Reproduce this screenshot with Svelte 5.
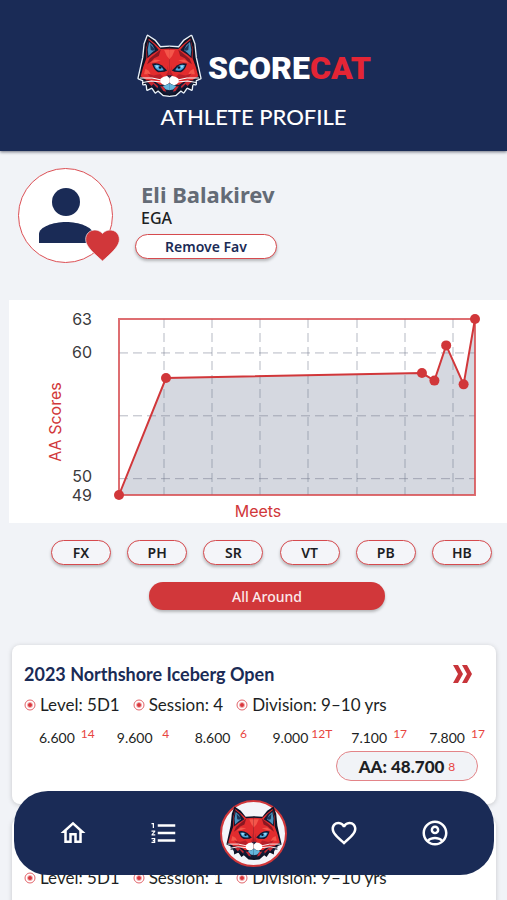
<script>
	const plot = { left: 110, top: 19, width: 356, height: 176 };
	const domain = { min: 48.7, max: 62.7 };

	// day = share of the season that has passed, 0 to 1
	const scores = [
		{ day: 0, value: 48.7 },
		{ day: 0.132, value: 58 },
		{ day: 0.851, value: 58.4 },
		{ day: 0.886, value: 57.8 },
		{ day: 0.919, value: 60.6 },
		{ day: 0.968, value: 57.5 },
		{ day: 1, value: 62.7 }
	];

	const x = (day) => plot.left + day * plot.width;
	const y = (value) =>
		plot.top + ((domain.max - value) / (domain.max - domain.min)) * plot.height;

	const line = scores.map((s) => `${x(s.day)},${y(s.value)}`).join(' ');
	const area = `${line} ${x(1)},${y(domain.min)} ${x(0)},${y(domain.min)}`;
	const columns = [155, 203, 251, 299, 348, 396, 444];
	const rows = [60, 55, 50];

	const events = ['FX', 'PH', 'SR', 'VT', 'PB', 'HB'];

	const meets = [
		{
			name: '2023 Northshore Iceberg Open',
			level: '5D1',
			session: '4',
			division: '9–10 yrs',
			results: [
				['6.600', '14'],
				['9.600', '4'],
				['8.600', '6'],
				['9.000', '12T'],
				['7.100', '17'],
				['7.800', '17']
			],
			total: ['48.700', '8']
		},
		{
			level: '5D1',
			session: '1',
			division: '9–10 yrs',
			results: []
		}
	];
</script>

{#snippet catSide()}
	<path fill="#0d1226" d="M113 52 L84 54 L68 34 L47 20 L38 44 L34 84 L25 124 L20 146 L34 152 L34 164 L44 162 L46 180 L60 173 L70 188 L78 182 L94 196 L113 198Z" />
	<path fill="#e22c2e" d="M113 57 L86 59 L68 42 L50 28 L43 54 L43 86 L33 114 L26 140 L44 152 L68 156 L84 166 L113 160Z" />
	<path fill="#151a33" d="M49 31 L44 58 L46 86 L58 76 L80 62 L66 45Z" />
	<path fill="#4a93bf" d="M51 38 L47 60 L49 80 L58 71 L69 62 L62 48Z" />
	<path fill="#1d3558" d="M54 44 L56 62 L63 64 L69 60Z" />
	<path fill="#8a1722" d="M86 60 L74 70 L52 88 L45 104 L58 95 L66 86 L80 80Z" />
	<path fill="#f4564a" d="M96 62 L104 80 L113 90 L113 62Z M54 100 L68 90 L86 92 L70 98Z M40 118 L50 124 L56 134 L36 134Z" />
	<path fill="#b81f29" d="M46 132 L64 138 L84 133 L92 141 L80 151 L58 148Z" />
	<path fill="#111832" d="M60 103 Q74 98 90 108 L105 123 L97 127 L78 128 Q66 124 60 103Z" />
	<path fill="#4ba9de" d="M66 107 Q84 102 95 122 Q72 128 66 107Z" />
	<path fill="#a5def5" d="M70 108 L79 109 L75 117Z" />
	<circle cx="84" cy="114" r="4" fill="#0d1226" />
	<path fill="#ba1d29" d="M105 108 L107 128 L101 137 L113 140 L113 134 L109 122Z" />
	<path fill="#131b35" d="M34 152 L64 155 L82 166 L98 166 L113 176 L113 194 L96 190 L85 180 L76 181 L68 172 L60 175 L54 167 L46 170Z" />
	<path fill="#c72831" d="M40 153 L62 156 L78 170 L76 176 L64 163 L58 169 L50 160Z M84 170 L95 171 L102 186 L94 184Z" />
	<path fill="#fff" d="M113 141 Q98 136 86 147 Q80 163 98 167 Q108 165 113 158Z" />
	<path fill="#63b6dc" d="M92 169 L106 165 L113 160 L113 182 L101 180Z" />
	<path fill="#172345" d="M104 138 L113 137 L113 147Z" />
	<path fill="none" stroke="#fff" stroke-width="3" d="M88 151 L60 145 L24 145 M87 157 L58 154 L32 159" />
{/snippet}

{#snippet cat(outline)}
	<svg class="cat" viewBox="12 8 200 200" aria-hidden="true">
		{#if outline}
			<path
				fill="#fff"
				stroke="#e9f1f8"
				stroke-width="8"
				stroke-linejoin="round"
				d="M112 52 L84 54 L68 34 L47 20 L38 44 L34 84 L25 124 L20 146 L34 152 L34 164 L44 162 L46 180 L60 173 L70 188 L78 182 L94 196 L112 198 L130 196 L146 182 L154 188 L164 173 L178 180 L180 162 L190 164 L190 152 L204 146 L199 124 L190 84 L186 44 L177 20 L156 34 L140 54Z"
			/>
		{/if}
		{@render catSide()}
		<g transform="translate(224 0) scale(-1 1)">{@render catSide()}</g>
	</svg>
{/snippet}

{#snippet bullet()}
	<svg class="bullet" viewBox="0 0 12 12" aria-hidden="true">
		<circle cx="6" cy="6" r="5" fill="#fff" stroke="#e2646a" />
		<circle cx="6" cy="6" r="2.5" fill="#d9363c" stroke="#f3b3b5" />
	</svg>
{/snippet}

<div class="app">
	<header>
		<div class="brand">
			{@render cat(true)}
			<span class="wordmark">SCORE<span>CAT</span></span>
		</div>
		<h1>ATHLETE PROFILE</h1>
	</header>

	<main>
		<section class="profile">
			<div class="avatar">
				<svg class="person" viewBox="0 0 54 56" aria-hidden="true">
					<circle cx="27" cy="14" r="14" />
					<path d="M0 55V46C0 39 14 34 27 34S54 39 54 46V55Z" />
				</svg>
				<svg class="fav" viewBox="2 3 20 19" aria-hidden="true">
					<path d="M12 21.4l-1.5-1.3C5.4 15.4 2 12.3 2 8.5 2 5.4 4.4 3 7.5 3c1.7 0 3.4.8 4.5 2.1C13.1 3.8 14.8 3 16.5 3 19.6 3 22 5.4 22 8.5c0 3.8-3.4 6.9-8.5 11.6L12 21.4z" />
				</svg>
			</div>
			<div class="who">
				<h2>Eli Balakirev</h2>
				<p>EGA</p>
				<button class="pill remove">Remove Fav</button>
			</div>
		</section>

		<section class="chart">
			<svg viewBox="0 0 498 223" role="img" aria-label="AA Scores by meet">
				<polygon class="area" points={area} />
				<g class="grid">
					{#each columns as col}
						<line x1={col} x2={col} y1={plot.top} y2={plot.top + plot.height} />
					{/each}
					{#each rows as row}
						<line x1={plot.left} x2={plot.left + plot.width} y1={y(row)} y2={y(row)} />
					{/each}
				</g>
				<rect class="frame" x={plot.left} y={plot.top} width={plot.width} height={plot.height} />
				<polyline class="line" points={line} />
				{#each scores as s}
					<circle class="dot" cx={x(s.day)} cy={y(s.value)} r="5" />
				{/each}
				<g class="ticks">
					<text x="83" y="25">63</text>
					<text x="83" y="58">60</text>
					<text x="83" y="182">50</text>
					<text x="83" y="201">49</text>
				</g>
				<text class="axis" x="249" y="217">Meets</text>
				<text class="axis" transform="translate(52 122) rotate(-90)">AA Scores</text>
			</svg>
		</section>

		<section class="filters">
			<div class="events">
				{#each events as event}
					<button class="pill">{event}</button>
				{/each}
			</div>
			<button class="all">All Around</button>
		</section>

		<section class="meets">
			{#each meets as meet}
				<article>
					<div class="title">
						<h3>{meet.name ?? ''}</h3>
						<svg class="more" viewBox="0 0 19 18" aria-hidden="true">
							<path d="M0 0H5L10 9L5 18H0L5 9Z M9 0H14L19 9L14 18H9L14 9Z" />
						</svg>
					</div>
					<div class="meta">
						<span>{@render bullet()}Level: {meet.level}</span>
						<span>{@render bullet()}Session: {meet.session}</span>
						<span>{@render bullet()}Division: {meet.division}</span>
					</div>
					<div class="results">
						{#each meet.results as [score, rank]}
							<span>{score}<sup>{rank}</sup></span>
						{/each}
					</div>
					{#if meet.total}
						<div class="total">AA: {meet.total[0]} <small>{meet.total[1]}</small></div>
					{/if}
				</article>
			{/each}
		</section>
	</main>

	<nav>
		<a href="#home" aria-label="Home">
			<svg viewBox="0 0 24 24"><path d="M12 5.69l5 4.5V18h-2v-6H9v6H7v-7.81l5-4.5M12 3L2 12h3v8h6v-6h2v6h6v-8h3L12 3z" /></svg>
		</a>
		<a href="#rankings" aria-label="Rankings">
			<svg viewBox="0 0 24 24"><path d="M2 17h2v.5H3v1h1v.5H2v1h3v-4H2v1zm1-9h1V4H2v1h1v3zm-1 3h1.8L2 13.1v.9h3v-1H3.2L5 10.9V10H2v1zm5-6v2h14V5H7zm0 14h14v-2H7v2zm0-6h14v-2H7v2z" /></svg>
		</a>
		<a class="center" href="#scorecat" aria-label="ScoreCat">{@render cat(false)}</a>
		<a href="#favorites" aria-label="Favorites">
			<svg viewBox="0 0 24 24"><path d="M16.5 3c-1.74 0-3.41.81-4.5 2.09C10.91 3.81 9.24 3 7.5 3 4.42 3 2 5.42 2 8.5c0 3.78 3.4 6.86 8.55 11.54L12 21.35l1.45-1.32C18.6 15.36 22 12.28 22 8.5 22 5.42 19.58 3 16.5 3zm-4.4 15.55l-.1.1-.1-.1C7.14 14.24 4 11.39 4 8.5 4 6.5 5.5 5 7.5 5c1.54 0 3.04.99 3.57 2.36h1.87C13.46 5.99 14.96 5 16.5 5c2 0 3.5 1.5 3.5 3.5 0 2.89-3.14 5.74-7.9 10.05z" /></svg>
		</a>
		<a href="#account" aria-label="Account">
			<svg viewBox="0 0 24 24"><path d="M12 2C6.48 2 2 6.48 2 12s4.48 10 10 10 10-4.48 10-10S17.52 2 12 2zM7.35 18.5C8.66 17.56 10.26 17 12 17s3.34.56 4.65 1.5C15.34 19.44 13.74 20 12 20s-3.34-.56-4.65-1.5zm10.79-1.38C16.45 15.8 14.32 15 12 15s-4.45.8-6.14 2.12C4.7 15.73 4 13.95 4 12c0-4.42 3.58-8 8-8s8 3.58 8 8c0 1.95-.7 3.73-1.86 5.12zM12 6c-1.93 0-3.5 1.57-3.5 3.5S10.07 13 12 13s3.5-1.57 3.5-3.5S13.93 6 12 6zm0 5c-.83 0-1.5-.67-1.5-1.5S11.17 8 12 8s1.5.67 1.5 1.5S12.83 11 12 11z" /></svg>
		</a>
	</nav>
</div>

<style>
	:global(body) {
		background: #f1f3f7;
	}

	.app {
		height: 100vh;
		display: flex;
		flex-direction: column;
		font-family: Lato, sans-serif;
		color: #1d1f24;
	}

	h1,
	h2,
	h3,
	p {
		margin: 0;
	}

	button {
		font-family: 'Noto Sans', sans-serif;
		cursor: pointer;
	}

	header {
		display: flex;
		flex-direction: column;
		align-items: center;
		padding: 32px 0 16px;
		background: #1a2b56;
		color: #fff;
		box-shadow: 0 1px 3px rgba(20, 25, 45, 0.6);
		z-index: 1;
	}

	.brand {
		display: flex;
		align-items: center;
		gap: 5px;
		height: 67px;
	}

	.brand .cat {
		width: 67px;
		height: 67px;
	}

	.wordmark {
		padding-top: 4px;
		font: 900 32px/40px Roboto, sans-serif;
	}

	.wordmark span {
		color: #e42535;
	}

	h1 {
		font-size: 22px;
		line-height: 36px;
		font-weight: 500;
	}

	main {
		flex: 1;
		min-height: 0;
		overflow-y: auto;
		scrollbar-width: none;
	}

	.profile {
		display: flex;
		gap: 22px;
		padding: 17px 18px 37px;
	}

	.avatar {
		position: relative;
		display: flex;
		align-items: center;
		justify-content: center;
		box-sizing: border-box;
		width: 95px;
		height: 95px;
		border: 1px solid #dc5055;
		border-radius: 50%;
		background: #fff;
	}

	.person {
		width: 54px;
		height: 56px;
		fill: #1a2b56;
	}

	.fav {
		position: absolute;
		right: -8px;
		bottom: 0;
		width: 35px;
		height: 32px;
		fill: #d1373a;
		stroke: #f1f3f7;
		stroke-width: 0.4;
	}

	.who {
		display: flex;
		flex-direction: column;
		align-items: flex-start;
		padding-top: 12px;
	}

	h2 {
		padding-left: 6px;
		font: bold 22px/28px 'Noto Sans', sans-serif;
		color: #646b76;
	}

	p {
		padding-left: 6px;
		font: 500 16px/20px 'Noto Sans', sans-serif;
	}

	.pill {
		width: 60px;
		height: 25px;
		padding: 0;
		border: 1px solid #d64a4e;
		border-radius: 13px;
		background: #f4f5f9;
		color: #1d1f24;
		font-size: 14px;
		line-height: 20px;
		font-weight: 600;
		box-shadow: 0 2px 3px rgba(0, 0, 0, 0.25);
	}

	.pill.remove {
		width: 142px;
		margin-top: 6px;
		background: #fff;
		color: #1a2b56;
	}

	.chart {
		margin-left: 9px;
		background: #fff;
		font-family: Inter, sans-serif;
	}

	.chart svg {
		display: block;
		width: 100%;
	}

	.area {
		fill: #d5d8e0;
	}

	.grid line {
		stroke: #6e7488;
		stroke-opacity: 0.5;
		stroke-dasharray: 9 5;
	}

	.frame {
		fill: none;
		stroke: #d64a4e;
		stroke-width: 2;
		stroke-opacity: 0.8;
	}

	.line {
		fill: none;
		stroke: #d1373a;
		stroke-width: 2;
	}

	.dot {
		fill: #d1373a;
	}

	.ticks text {
		fill: #3b3b3d;
		font-size: 16px;
		text-anchor: end;
	}

	.axis {
		fill: #d1373a;
		font-size: 16px;
		text-anchor: middle;
	}

	.filters {
		padding: 17px 15px 35px 51px;
	}

	.events {
		display: flex;
		justify-content: space-between;
	}

	.all {
		display: block;
		width: 236px;
		height: 28px;
		margin: 17px auto 0 98px;
		padding: 0;
		border: 0;
		border-radius: 14px;
		background: #d1373a;
		color: #fbe9ea;
		font-size: 14px;
		font-weight: 500;
		box-shadow: 0 2px 3px rgba(0, 0, 0, 0.25);
	}

	.meets {
		display: flex;
		flex-direction: column;
		gap: 14px;
		padding: 0 11px 0 12px;
	}

	article {
		box-sizing: border-box;
		min-height: 158px;
		padding: 14px 8px 23px 12px;
		border-radius: 8px;
		background: #fff;
		box-shadow: 0 1px 5px rgba(0, 0, 0, 0.18);
	}

	.title {
		display: flex;
		align-items: center;
		justify-content: space-between;
		height: 30px;
		padding-right: 16px;
	}

	h3 {
		font-size: 18px;
		line-height: 30px;
		color: #1a2b56;
	}

	.more {
		width: 19px;
		height: 18px;
		fill: #c8343a;
	}

	.meta {
		display: flex;
		gap: 13px;
		font-size: 17px;
		line-height: 32px;
	}

	.meta span {
		display: flex;
		align-items: center;
		gap: 4px;
	}

	.bullet {
		width: 12px;
		height: 12px;
	}

	.results {
		display: flex;
		justify-content: space-between;
		padding: 3px 0 0 15px;
		font-size: 14px;
		line-height: 28px;
	}

	.results span {
		display: flex;
		gap: 3px;
	}

	sup {
		min-width: 20px;
		font-size: 12px;
		line-height: 20px;
		text-align: center;
		color: #e8453f;
	}

	.total {
		display: flex;
		align-items: center;
		justify-content: center;
		gap: 4px;
		box-sizing: border-box;
		width: 142px;
		height: 30px;
		margin: -1px 10px 0 auto;
		border: 1px solid #e38488;
		border-radius: 15px;
		background: #f1f3f7;
		font-size: 17px;
		font-weight: 900;
	}

	small {
		font-size: 12px;
		font-weight: 400;
		color: #e8453f;
	}

	nav {
		position: fixed;
		left: 14px;
		right: 13px;
		bottom: 25px;
		display: grid;
		grid-template-columns: repeat(5, 1fr);
		place-items: center;
		box-sizing: border-box;
		height: 84px;
		padding: 0 14px;
		border-radius: 34px;
		background: #1a2b56;
		z-index: 2;
	}

	nav a {
		display: flex;
		align-items: center;
		justify-content: center;
	}

	nav svg {
		width: 30px;
		height: 30px;
		fill: #fff;
	}

	.center {
		box-sizing: border-box;
		width: 67px;
		height: 67px;
		border: 2px solid #d1373a;
		border-radius: 50%;
		background: #f4f5f9;
	}

	.center .cat {
		width: 60px;
		height: 60px;
	}
</style>
